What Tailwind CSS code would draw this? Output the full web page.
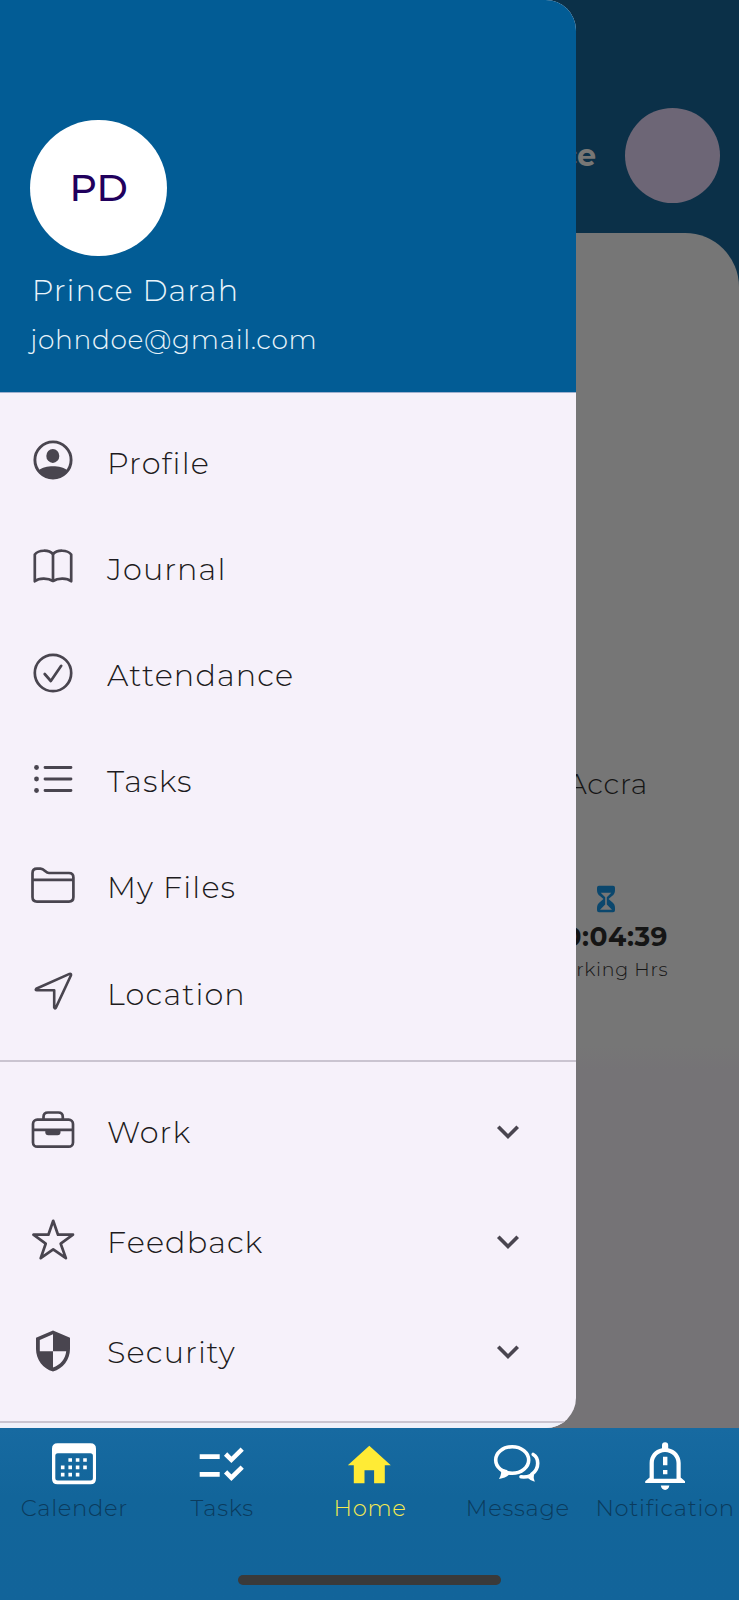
<!DOCTYPE html>
<html lang="en">
<head>
<meta charset="utf-8">
<title>Home</title>
<script src="https://cdn.jsdelivr.net/npm/@tailwindcss/browser@4"></script>
</head>
<body class="font-['Montserrat','Inter',sans-serif] font-light">
<div class="relative flex h-[1600px] w-[739px] flex-col overflow-hidden bg-[#0b3048]">

  <!-- Dimmed home screen -->
  <header class="flex h-[233px] shrink-0 items-center justify-end gap-[29px] pr-[19px] pt-[78px]">
    <span class="pt-px text-[30.3px] leading-9 font-bold text-[#787775]">Prince</span>
    <div class="size-[95px] rounded-full bg-[#6d6676]"></div>
  </header>
  <main class="flex h-[1194.5px] shrink-0 flex-col items-end rounded-t-[54px] bg-linear-to-b from-[#767676] from-68% to-[#757376] to-70% text-[#151515]">
    <p class="mt-[532.8px] mr-[91px] text-[28.4px] leading-9 tracking-[0.7px]">Accra</p>
    <svg class="mt-[82px] mr-[121px] h-[30px] w-6" viewBox="-12 -15 24 30"><path fill="#0b476d" fill-rule="evenodd" d="M-7-13.300H7Q9-13.300 9-11.300V-9Q9-5 6-3L2.500 0 6 3Q9 5 9 9V11.300Q9 13.300 7 13.300H-7Q-9 13.300-9 11.300V9Q-9 5-6 3L-2.500 0-6-3Q-9-5-9-9V-11.300Q-9-13.300-7-13.300ZM-5.300-6.300-.8-1.800V5.500L-6 10.800H6L.8 5.500V-1.800L5.300-6.300Z"/></svg>
    <p class="mt-[5.2px] mr-[71px] text-[26.5px] leading-9 font-bold tracking-[0.5px]">00:04:39</p>
    <p class="mt-px mr-[70.7px] text-[18.95px] leading-7 tracking-[0.7px]">Working Hrs</p>
  </main>

  <!-- Bottom navigation -->
  <nav class="flex h-[172.5px] shrink-0 flex-col bg-linear-to-b from-[#176aa1] via-[#12659a] via-40% to-[#12649a] text-[22.7px] leading-7 tracking-[0.7px] text-[#0b3b5d]">
    <div class="grid grid-cols-5 pt-[12.500px]">
      <div class="flex flex-col items-center gap-[6.200px]">
        <svg class="size-12 overflow-visible" viewBox="-24 -24 48 48" fill="#fff"><path fill-rule="evenodd" d="M-16.500-20.800H16.500Q22-20.800 22-15.300V14.700Q22 20.200 16.500 20.200H-16.500Q-22 20.200-22 14.700V-15.300Q-22-20.800-16.500-20.800ZM-16.200-10.800Q-18.700-10.800-18.700-8.300V14Q-18.700 16.500-16.200 16.500H16.400Q18.900 16.500 18.900 14V-8.300Q18.900-10.800 16.400-10.800Z"/><path fill="none" stroke="#fff" stroke-width="3.600" d="M-5.600-4h3.600M1.800-4h3.600M9.200-4h3.600M-13.100 3.400h3.600M-5.600 3.400h3.600M1.800 3.400h3.600M9.200 3.400h3.600M-13.100 10.600h3.600M-5.600 10.600h3.600M1.800 10.600h3.600"/></svg>
        <span class="pl-px">Calender</span>
      </div>
      <div class="flex flex-col items-center gap-[6.200px]">
        <svg class="size-12" viewBox="-24 -24 48 48" fill="none" stroke="#fff" stroke-width="4.600"><path d="M-22.300-7.400H-2.300M-22.300 10.400H-2.300M3.600-10 9.400-4.200 20.200-14.800M3.600 7.900 9.400 13.700 20.200 3.100"/></svg>
        <span class="pl-px">Tasks</span>
      </div>
      <div class="flex flex-col items-center gap-[6.200px] text-[#f5ea50]">
        <svg class="size-12" viewBox="-24 -24 48 48" fill="#ffeb35"><path d="M.3-18.300 21.800 1.200H15.800V19.200H5.100V6.200H-4.500V19.200H-15.200V1.200H-21.200Z"/></svg>
        <span class="pl-px">Home</span>
      </div>
      <div class="flex flex-col items-center gap-[6.200px]">
        <svg class="size-12" viewBox="-24 -24 48 48" fill="none" stroke="#fff" stroke-width="3.600" stroke-linecap="round"><ellipse cx="-4.800" cy="-4" rx="16.500" ry="13.300"/><path fill="#fff" stroke="none" d="M-16.500 4.500Q-14.500 9-18 15-11.500 14-8 10.800L-10 6Z"/><path d="M16.200-9.500C21.500-6.500 23.500 4 14.500 10.500"/><path d="M4 12.800Q9 13.300 13 12"/><path fill="#fff" stroke="none" d="M9 12.500Q13 16.500 17.800 17.800 16 14 17 10.500L13 10Z"/></svg>
        <span class="pl-px">Message</span>
      </div>
      <div class="flex flex-col items-center gap-[6.200px]">
        <svg class="size-12 overflow-visible" viewBox="-24 -24 48 48" fill="#fff"><path fill-rule="evenodd" d="M-3-15.800V-18.700A3.100 3.100 0 0 1 3.200-18.700V-15.800C10.500-14.500 15.700-8.500 15.700-1V13.500L20 17.200V19H-19.800V17.200L-15.400 13.500V-1C-15.400-8.500-10.300-14.500-3-15.800ZM0-12C-6.500-12-11.200-7-11.200-1V14.800H11.500V-1C11.500-7 6.800-12 0-12Z"/><path d="M-2-7.200H2.400V1.200H-2ZM-2 6H2.400V10.200H-2ZM-4.200 21.500H4.400Q3.500 25.900.1 25.900T-4.200 21.500Z"/></svg>
        <span>Notification</span>
      </div>
    </div>
    <div class="mx-auto mt-[53px] h-[9.700px] w-[263px] rounded-full bg-[#3a3a3a]"></div>
  </nav>

  <!-- Navigation drawer -->
  <aside class="absolute top-0 left-0 flex h-[1427.500px] w-[576px] flex-col overflow-hidden rounded-r-[30.300px] bg-[#f6f1fa] text-[#1d1b20]">
    <div class="flex h-[393px] shrink-0 flex-col border-b-[1.500px] border-[#9fb1cf] bg-[#025c95] pt-[119.500px] pl-[30.300px] text-[#e9f4fb]">
      <div class="flex size-[136.500px] shrink-0 items-center justify-center rounded-full bg-white pt-[2px] text-[37.900px] font-medium text-[#21005d]">PD</div>
      <p class="mt-[17px] ml-[1.500px] text-[30.300px] leading-9 tracking-[1.060px]">Prince Darah</p>
      <p class="mt-[12.500px] text-[26.500px] leading-9 tracking-[0.640px]">johndoe@gmail.com</p>
    </div>

    <ul class="mt-[16.500px] text-[30.300px] leading-9 tracking-[1.120px]">
      <li class="flex h-[106.130px] items-center gap-[30px] pl-[29px]">
        <svg class="-mt-[4.600px] size-12" viewBox="-24 -24 48 48" fill="#49454f"><circle r="18.100" fill="none" stroke="#49454f" stroke-width="2.900"/><ellipse cx="-.2" cy="-4.100" rx="6.500" ry="7"/><path d="M-14.200 10.200C-8 5 8 5 14.200 10.200 7 22-7 22-14.200 10.200Z"/></svg>
        <span class="pt-[2px]">Profile</span>
      </li>
      <li class="flex h-[106.130px] items-center gap-[30px] pl-[29px]">
        <svg class="-mt-[4.600px] size-12" viewBox="-24 -24 48 48" fill="none" stroke="#49454f" stroke-width="2.700" stroke-linejoin="round"><path d="M-18.200-11.500C-14.500-16.300-4-16.700 0-11.700 4-16.700 14.500-16.300 18.200-11.500V15.300C14 11.800 5 11.800 0 15-5 11.800-14 11.800-18.200 15.300ZM0-11.700V15"/></svg>
        <span class="pt-[2px]">Journal</span>
      </li>
      <li class="flex h-[106.130px] items-center gap-[30px] pl-[29px]">
        <svg class="-mt-[4.600px] size-12" viewBox="-24 -24 48 48" fill="none" stroke="#49454f" stroke-width="2.700" stroke-linecap="round" stroke-linejoin="round"><circle r="18.200"/><path d="M-8.300 1-2.200 8 8.200-7.200"/></svg>
        <span class="pt-[2px]">Attendance</span>
      </li>
      <li class="flex h-[106.130px] items-center gap-[30px] pl-[29px]">
        <svg class="-mt-[4.600px] size-12" viewBox="-24 -24 48 48" fill="#49454f" stroke="#49454f" stroke-width="2.800" stroke-linecap="round"><path d="M-8-11.500H18M-8 0H18M-8 11.500H18"/><g stroke="none"><circle cx="-16.500" cy="-11.500" r="2.400"/><circle cx="-16.500" r="2.400"/><circle cx="-16.500" cy="11.500" r="2.400"/></g></svg>
        <span class="pt-[2px]">Tasks</span>
      </li>
      <li class="flex h-[106.130px] items-center gap-[30px] pl-[29px]">
        <svg class="-mt-[4.600px] size-12" viewBox="-24 -24 48 48" fill="none" stroke="#49454f" stroke-width="2.700"><path d="M-20.500-11.800Q-20.500-16.300-16-16.300H-12.500C-8.500-16.300-7.500-12-4-12H15.900Q20.400-12 20.400-7.500V12.100Q20.400 16.600 15.900 16.600H-16Q-20.500 16.600-20.500 12.100ZM-20.500-5.200H20.400"/></svg>
        <span class="pt-[2px]">My Files</span>
      </li>
      <li class="flex h-[106.130px] items-center gap-[30px] pl-[29px]">
        <svg class="-mt-[4.600px] size-12" viewBox="-24 -24 48 48" fill="none" stroke="#49454f" stroke-width="2.600" stroke-linejoin="round"><path d="M16.500-17.100-16.800-2.200Q-18-.9-16-.7H1.200V16.500Q1.700 18.200 2.900 16.600L18-15.800Q18.300-17.600 16.500-17.100Z"/></svg>
        <span class="pt-[3px]">Location</span>
      </li>
    </ul>

    <ul class="mt-[14px] border-t-2 border-[#cac4d0] pt-[14.700px] text-[30.300px] leading-9 tracking-[1.120px]">
      <li class="flex h-[110px] items-center gap-[30px] pr-[56px] pl-[29px]">
        <svg class="-mt-[4.600px] size-12" viewBox="-24 -24 48 48" fill="none" stroke="#49454f" stroke-width="2.700"><rect x="-20" y="-10.300" width="40" height="27" rx="4.300"/><path d="M-9.500-10.500V-13Q-9.500-17.500-5-17.500H5.300Q9.800-17.500 9.800-13V-10.500M-20-.2H20"/><path fill="#49454f" stroke="none" d="M-7.700-.5H7.500V2.200Q7.500 5.200 4.500 5.200H-4.700Q-7.700 5.200-7.700 2.200Z"/></svg>
        <span class="grow pt-[2px]">Work</span>
        <svg class="h-6 w-6" viewBox="-12 -12 24 24" fill="none" stroke="#49454f" stroke-width="3.700"><path d="M-9.700-5.200 0 4.500 9.700-5.200"/></svg>
      </li>
      <li class="flex h-[110px] items-center gap-[30px] pr-[56px] pl-[29px]">
        <svg class="-mt-[4.600px] size-12" viewBox="-24 -24 48 48" fill="none" stroke="#49454f" stroke-width="2.700" stroke-linejoin="round"><path d="M.2-19.200 5-5.300H20L7.700 3.700 12.900 18.200.2 9.400-12.300 18.200-7.300 3.700-19.600-5.300H-4.600Z"/></svg>
        <span class="grow pt-[2px]">Feedback</span>
        <svg class="h-6 w-6" viewBox="-12 -12 24 24" fill="none" stroke="#49454f" stroke-width="3.700"><path d="M-9.700-5.200 0 4.500 9.700-5.200"/></svg>
      </li>
      <li class="flex h-[110px] items-center gap-[30px] pr-[56px] pl-[29px]">
        <svg class="-mt-[1px] size-12" viewBox="-24 -24 48 48" fill="#49454f"><path fill-rule="evenodd" d="M0-20.500 17-13.200V-2C17 8.500 10 17.800 0 20.500-10 17.800-17 8.500-17-2V-13.200ZM0-16.700-13.200-11V.3H0ZM0 .3V16.600C7 14.300 12.500 8 13.200.3Z"/></svg>
        <span class="grow pt-[2px]">Security</span>
        <svg class="h-6 w-6" viewBox="-12 -12 24 24" fill="none" stroke="#49454f" stroke-width="3.700"><path d="M-9.700-5.200 0 4.500 9.700-5.200"/></svg>
      </li>
    </ul>
    <div class="mt-[14px] grow border-t-2 border-[#cac4d0] bg-[#f0f1fa]"></div>
  </aside>
</div>
</body>
</html>
